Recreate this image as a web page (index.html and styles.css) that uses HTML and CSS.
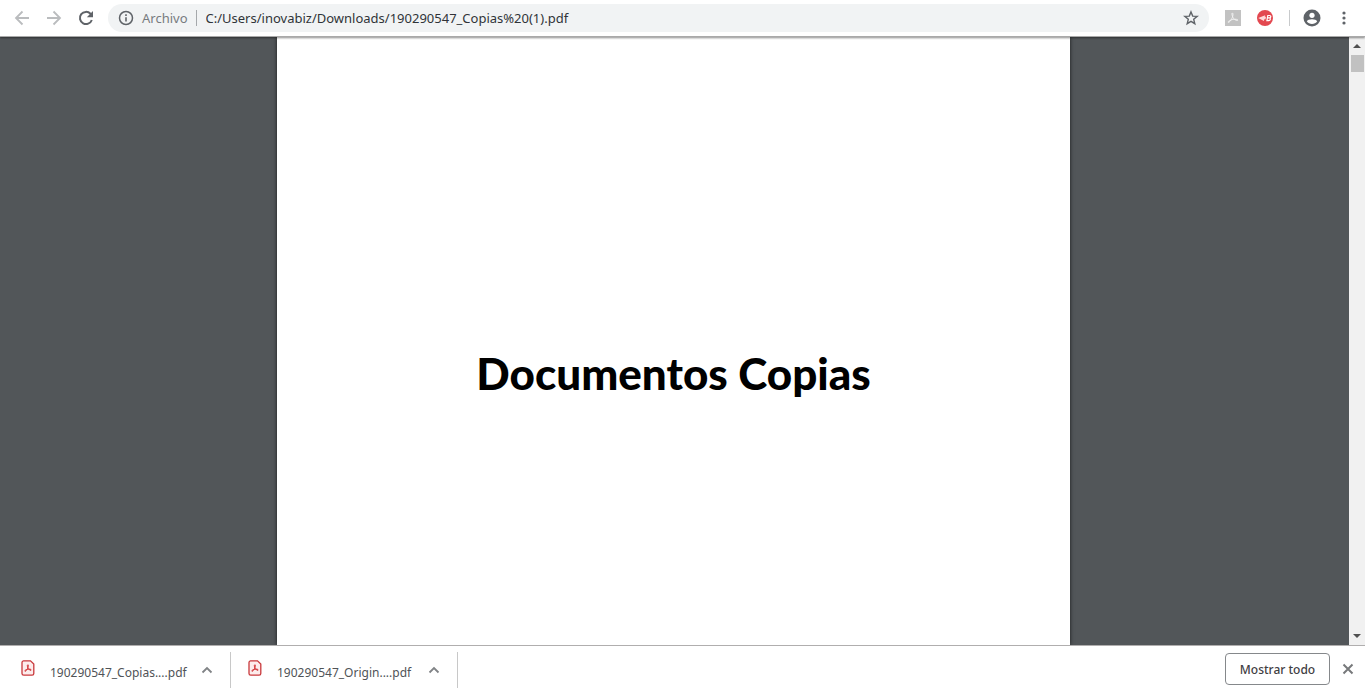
FILE: index.html
```html
<!DOCTYPE html>
<html lang="es">
<head>
<meta charset="utf-8">
<meta name="viewport" content="width=device-width, initial-scale=1">
<title>190290547_Copias (1).pdf</title>
<link rel="stylesheet" href="styles.css">
</head>
<body>
<svg class="defs" aria-hidden="true">
  <symbol id="pdf" viewBox="0 0 14 16">
    <path d="M2.500.8h7L12.800 4v9.400a1.700 1.700 0 0 1-1.700 1.700H2.700A1.700 1.700 0 0 1 1 13.400V2.500A1.700 1.700 0 0 1 2.500.8z" fill="#fdecec" stroke="#c9393c" stroke-width="1.300"/>
    <path d="M6.800 4.800c1-.1.500 1.900-.3 3.700-.8 1.700-1.900 3.100-2.600 2.700-.6-.7 1.300-1.700 3.100-2 1.700-.3 3.400.1 3.200.9-.4.800-2-.3-2.900-1.600C6.500 7.400 5.900 5 6.800 4.800z" fill="none" stroke="#d0282c" stroke-width="1"/>
  </symbol>
</svg>
<header class="toolbar">
  <nav class="nav" aria-label="Navegación">
    <button class="icon-btn faded" aria-label="Atrás"><svg width="16" height="16" viewBox="0 0 16 16"><path d="M15 8H2M8.500 1.500L2 8l6.500 6.500" fill="none" stroke="currentColor" stroke-width="1.800"/></svg></button>
    <button class="icon-btn faded" aria-label="Adelante"><svg width="16" height="16" viewBox="0 0 16 16"><path d="M1 8h13M7.500 1.500L14 8l-6.500 6.500" fill="none" stroke="currentColor" stroke-width="1.800"/></svg></button>
    <button class="icon-btn" aria-label="Recargar"><svg width="16" height="16" viewBox="0 0 16 16"><path d="M13.800 10A6.100 6.100 0 1 1 12.500 3.800L14 5.300" fill="none" stroke="currentColor" stroke-width="2"/><path d="M15 1v6.200H8.800z" fill="currentColor"/></svg></button>
  </nav>
  <div class="omnibox">
    <svg class="info" width="16" height="16" viewBox="0 0 16 16"><circle cx="8" cy="8" r="6.500" fill="none" stroke="currentColor" stroke-width="1.500"/><path d="M8 7.200v4.300M8 4.300v1.600" stroke="currentColor" stroke-width="1.600"/></svg>
    <label class="scheme" for="url">Archivo</label>
    <input class="url" id="url" type="text" spellcheck="false" value="C:/Users/inovabiz/Downloads/190290547_Copias%20(1).pdf">
    <button class="icon-btn star" aria-label="Añadir a marcadores"><svg width="16" height="16" viewBox="0 0 16 16"><path d="M8 1.900l1.700 4.200 4.500.3-3.500 2.900 1.100 4.400L8 11.300l-3.800 2.400 1.100-4.400L1.800 6.400l4.500-.3z" fill="none" stroke="currentColor" stroke-width="1.400"/></svg></button>
  </div>
  <div class="extensions">
    <button class="icon-btn" aria-label="Adobe Acrobat"><svg width="16" height="16" viewBox="0 0 16 16"><path d="M0 0h16v16H0z" fill="#c2c2c2"/><path d="M7.300 3c1.100 0 .8 3-.3 5.200-1 2.200-3 4.700-3.800 4.100-.5-1 2.500-2.500 5-2.900 2.400-.4 4.900 0 4.700.8-.4.700-3-.1-4.300-1.700C7.400 7 6.400 3.200 7.300 3z" fill="none" stroke="#f3f3f3" stroke-width="1"/></svg></button>
    <button class="icon-btn" aria-label="Extensión B"><svg width="16" height="16" viewBox="0 0 16 16"><circle cx="8" cy="8" r="8" fill="#e34850"/><path d="M1.200 8l7-2.800-.4 1.600H9L8.500 9.300H7.300l-.4 1.600z" fill="#ffdada"/><path d="M10.800 5.500h1.800c1.700 0 1.400 2.300 0 2.400 1.300.2.900 2.700-.8 2.700H9.900zM10.400 7.900h2.200" fill="none" stroke="#fff" stroke-width="1.200"/></svg></button>
  </div>
  <div class="account">
    <button class="icon-btn" aria-label="Perfil"><svg width="18" height="18" viewBox="0 0 18 18"><circle cx="9" cy="9" r="8.500" fill="currentColor"/><circle cx="9" cy="6.300" r="2.600" fill="#fff"/><path d="M3.800 12.200c.9-2.700 9.500-2.700 10.400 0-2.200 3.600-8.200 3.600-10.400 0z" fill="#fff"/></svg></button>
    <button class="icon-btn" aria-label="Menú"><svg width="16" height="16" viewBox="0 0 16 16"><g fill="currentColor"><circle cx="8" cy="3" r="1.600"/><circle cx="8" cy="8" r="1.600"/><circle cx="8" cy="13" r="1.600"/></g></svg></button>
  </div>
</header>
<main class="viewer">
  <div class="canvas">
    <article class="sheet"><h1 class="title">Documentos Copias</h1></article>
  </div>
  <div class="scrollbar" aria-hidden="true">
    <svg class="arrow" width="8" height="4" viewBox="0 0 8 4"><path d="M0 4l4-4 4 4z" fill="#505050"/></svg>
    <div class="thumb"></div>
    <svg class="arrow" width="8" height="4" viewBox="0 0 8 4"><path d="M0 0h8L4 4z" fill="#505050"/></svg>
  </div>
</main>
<footer class="downloads">
  <div class="download">
    <svg class="pdf" width="14" height="16"><use href="#pdf"/></svg>
    <span class="name">190290547_Copias....pdf</span>
    <button class="icon-btn chevron" aria-label="Opciones"><svg width="12" height="8" viewBox="0 0 12 8"><path d="M1.500 6.500L6 2l4.500 4.500" fill="none" stroke="currentColor" stroke-width="1.800"/></svg></button>
  </div>
  <div class="download">
    <svg class="pdf" width="14" height="16"><use href="#pdf"/></svg>
    <span class="name">190290547_Origin....pdf</span>
    <button class="icon-btn chevron" aria-label="Opciones"><svg width="12" height="8" viewBox="0 0 12 8"><path d="M1.500 6.500L6 2l4.500 4.500" fill="none" stroke="currentColor" stroke-width="1.800"/></svg></button>
  </div>
  <button class="show-all">Mostrar todo</button>
  <button class="icon-btn close" aria-label="Cerrar"><svg width="12" height="12" viewBox="0 0 12 12"><path d="M1.500 1.500l9 9M10.500 1.500l-9 9" stroke="currentColor" stroke-width="2"/></svg></button>
</footer>
</body>
</html>
```
FILE: styles.css
```css
* { box-sizing: border-box; }

body {
  margin: 0;
  height: 100vh;
  display: flex;
  flex-direction: column;
  overflow: hidden;
  background: #fff;
  color: #5f6368;
  font-family: "Noto Sans", "Open Sans", sans-serif;
  font-size: 13px;
}

button, input { font: inherit; color: inherit; }
svg { display: block; flex: none; }
.defs { position: absolute; width: 0; height: 0; }

.icon-btn {
  display: flex;
  align-items: center;
  justify-content: center;
  flex: none;
  padding: 0;
  border: 0;
  background: none;
}

.toolbar {
  position: relative;
  display: flex;
  align-items: center;
  flex: none;
  height: 37px;
  padding: 0 13px 0 14px;
  border-bottom: 1px solid #a9a9a9;
  background: #fff;
  box-shadow: 0 1px 2px rgba(0, 0, 0, .45);
}

.nav { display: flex; gap: 16px; }
.faded { color: #babcbe; }

.omnibox {
  display: flex;
  align-items: center;
  flex: 1;
  height: 28px;
  margin-left: 14px;
  padding: 0 10px;
  border-radius: 14px;
  background: #f1f3f4;
}

.scheme {
  flex: none;
  margin-left: 8px;
  padding-right: 8px;
  border-right: 1px solid #a5a8ab;
  line-height: 16px;
  color: #777b7f;
}

.url {
  flex: 1;
  min-width: 0;
  padding: 0 0 0 9px;
  border: 0;
  outline: 0;
  background: none;
  color: #303338;
}

.extensions {
  display: flex;
  gap: 16px;
  margin-left: 16px;
  padding-right: 16px;
  border-right: 1px solid #c8cacc;
}

.account { display: flex; align-items: center; gap: 15px; margin-left: 13px; }

.viewer { display: flex; flex: 1; min-height: 0; }

.canvas {
  display: flex;
  justify-content: center;
  flex: 1;
  padding-right: 2px;
  background: #525659;
}

.sheet {
  width: 793px;
  padding-top: 308px;
  background: #fff;
  box-shadow: 0 0 4px rgba(0, 0, 0, .7);
  text-align: center;
}

.title {
  margin: 0;
  color: #000;
  font: 900 44px/56px Lato, sans-serif;
}

.scrollbar {
  display: flex;
  flex-direction: column;
  align-items: center;
  width: 16px;
  padding: 7px 0 7px;
  background: #f1f1f1;
}

.thumb { width: 13px; height: 17px; margin: 7px 0 auto; background: #c1c1c1; }

.downloads {
  position: relative;
  display: flex;
  align-items: center;
  flex: none;
  height: 49px;
  padding-right: 11px;
  border-top: 1px solid #b0aeae;
  background: #fff;
}

.download {
  display: flex;
  align-items: center;
  width: 231px;
  height: 36px;
  padding: 0 17px 0 21px;
  border-right: 1px solid #c8c8c8;
}

.download + .download { width: 227px; padding-left: 17px; }
.pdf { margin-bottom: 4px; }
.name { margin: 4px auto 0 15px; color: #505357; font-size: 12px; }
.chevron { color: #808386; }

.show-all {
  height: 32px;
  width: 105px;
  margin: 0 0 2px auto;
  padding: 0;
  border: 1px solid #85888b;
  border-radius: 4px;
  background: #fff;
  color: #3f4043;
  font-size: 12px;
  font-weight: 500;
}

.close { margin: 0 0 2px 12px; color: #77797b; }
```
